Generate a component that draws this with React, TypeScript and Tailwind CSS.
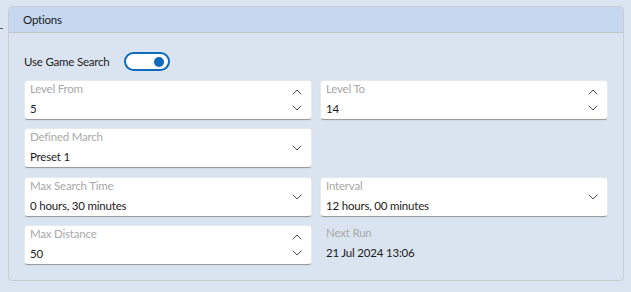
import { ChevronDown, ChevronUp } from "lucide-react";

type FieldProps = {
  label: string;
  value: string;
  spin?: boolean;
};

function Field({ label, value, spin }: FieldProps) {
  return (
    <div className="relative h-[40px] rounded-[4px] bg-white border border-[#e6e9ed] border-b-[#9b9b9b] shadow-[0_1px_1px_rgba(0,0,0,0.04)]">
      <div className="flex flex-col pl-[5px] pr-8">
        <span className="h-[16px] leading-[16px] text-[#a9a9a9]">{label}</span>
        <span className="mt-[4px] h-[16px] leading-[16px] text-[#1b1b1b]">{value}</span>
      </div>
      <div className="absolute right-[6px] top-0 bottom-0 flex flex-col items-center justify-center">
        {spin ? (
          <>
            <ChevronUp className="h-[16px] w-[16px] text-[#303030]" strokeWidth={1.25} />
            <ChevronDown className="h-[16px] w-[16px] text-[#303030]" strokeWidth={1.25} />
          </>
        ) : (
          <ChevronDown className="h-[16px] w-[16px] text-[#303030]" strokeWidth={1.25} />
        )}
      </div>
    </div>
  );
}

function Toggle() {
  return (
    <div className="flex h-[19px] w-[46px] items-center justify-end rounded-full border-2 border-[#0f6cbd] bg-white pr-[4px]">
      <div className="h-[10px] w-[10px] rounded-full bg-[#0f6cbd]" />
    </div>
  );
}

export default function App() {
  return (
    <div
      className="relative h-[292px] w-[631px] bg-[#dbe5f1] pt-[6px] pl-[8px] text-[11.5px] tracking-[-0.2px]"
      style={{ fontFamily: '"Segoe UI", Lato, "Noto Sans", sans-serif' }}
    >
      <span className="absolute left-0 top-[28px] h-[1px] w-[3px] bg-[#555]" />
      <div className="h-[275px] w-[616px] rounded-[4px] border border-[#c9ccd1] bg-[#dae4f0] overflow-hidden">
        <div className="flex h-[26px] items-center border-b border-[#c3c7cc] bg-[#c5d8ef] pl-[14px] text-[#1b1b1b]">
          Options
        </div>
        <div className="px-[15px]">
          <div className="flex h-[47px] items-start pt-[19px]">
            <span className="w-[100px] h-[19px] leading-[19px] text-[#1b1b1b]">Use Game Search</span>
            <Toggle />
          </div>
          <div className="grid grid-cols-2 gap-x-[8px] gap-y-[8px]">
            <Field label="Level From" value="5" spin />
            <Field label="Level To" value="14" spin />
            <Field label="Defined March" value="Preset 1" />
            <div />
          </div>
          <div className="mt-[9px] grid grid-cols-2 gap-x-[8px] gap-y-[8px]">
            <Field label="Max Search Time" value="0 hours, 30 minutes" />
            <Field label="Interval" value="12 hours, 00 minutes" />
            <Field label="Max Distance" value="50" spin />
            <div className="flex flex-col pl-[6px]">
              <span className="h-[16px] leading-[16px] text-[#a9a9a9]">Next Run</span>
              <span className="mt-[4px] h-[16px] leading-[16px] text-[#1b1b1b]">21 Jul 2024 13:06</span>
            </div>
          </div>
        </div>
      </div>
    </div>
  );
}
